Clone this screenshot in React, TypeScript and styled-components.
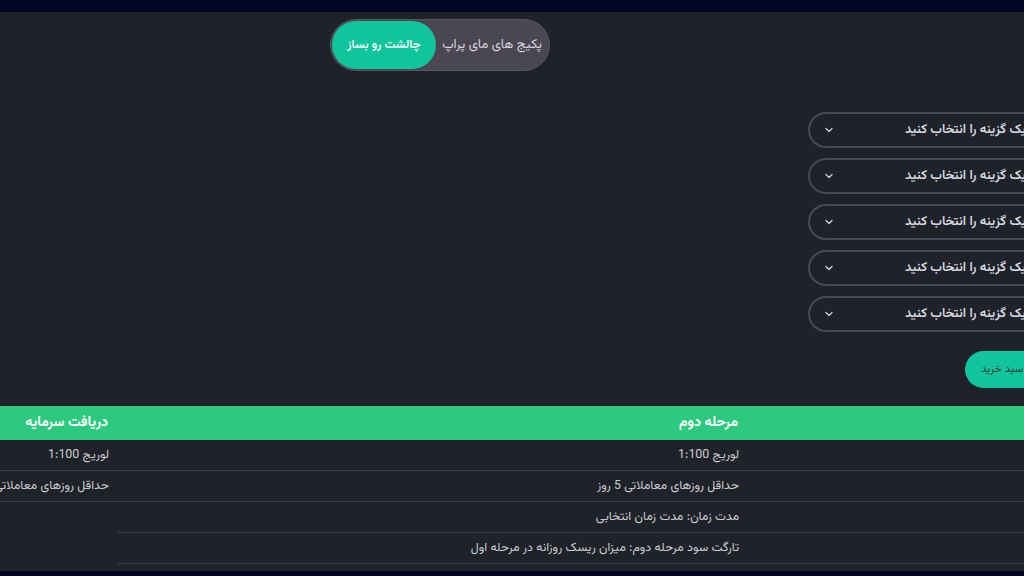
import React from "react";
import styled, { createGlobalStyle } from "styled-components";

const Global = createGlobalStyle`
  html, body { margin: 0; padding: 0; background: #1f2229; }
  body { font-family: "Vazirmatn", "Noto Sans Arabic", "DejaVu Sans", sans-serif; }
  * { box-sizing: border-box; }
`;

const Viewport = styled.div`
  width: 1024px;
  height: 576px;
  overflow: hidden;
  display: flex;
  flex-direction: column;
  background: #1f2229;
`;

const TopBar = styled.div`
  height: 12px;
  flex: none;
  background: #020823;
`;

const BottomBar = styled.div`
  height: 5px;
  flex: none;
  background: #020823;
`;

const Main = styled.div`
  flex: 1;
  overflow: hidden;
`;

const Page = styled.div`
  direction: rtl;
  width: 1890px;
  margin-left: -512px;
  display: flex;
  flex-direction: column;
`;

const ToggleRow = styled.div`
  display: flex;
  justify-content: center;
  padding-top: 7px;
`;

const Toggle = styled.div`
  width: 220px;
  height: 52px;
  margin-left: 14px;
  border-radius: 26px;
  background: #4a4753;
  border: 1px solid #57535f;
  padding: 1px;
  display: flex;
  align-items: stretch;
`;

const ToggleOption = styled.div<{ $active?: boolean }>`
  flex: ${(p) => (p.$active ? "0 0 104px" : "1")};
  order: ${(p) => (p.$active ? 2 : 1)};
  border-radius: 24px;
  background: ${(p) => (p.$active ? "#10c49b" : "transparent")};
  color: ${(p) => (p.$active ? "#f4fbf8" : "#d8d6dc")};
  font-size: ${(p) => (p.$active ? "12px" : "13px")};
  font-weight: ${(p) => (p.$active ? 600 : 400)};
  display: flex;
  align-items: center;
  justify-content: center;
  white-space: nowrap;
`;

const FormSection = styled.div`
  display: flex;
  padding-right: 240px;
  padding-top: 41px;
`;

const FormColumn = styled.div`
  width: 330px;
  display: flex;
  flex-direction: column;
  gap: 10px;
`;

const Select = styled.div`
  height: 36px;
  border: 2px solid #464a52;
  border-radius: 18px;
  display: flex;
  align-items: center;
  padding: 0 110px 0 14px;
  color: #d9dbe0;
  font-size: 13px;
  font-weight: 600;
  white-space: nowrap;
`;

const SelectText = styled.span`
  flex: 1;
`;

const Chevron = styled.svg`
  width: 10px;
  height: 10px;
  flex: none;
`;

const CartButton = styled.div`
  margin-top: 9px;
  width: 173px;
  height: 37px;
  border-radius: 19px;
  background: #12c49b;
  color: #2b3a3b;
  font-size: 11px;
  display: flex;
  align-items: center;
  justify-content: flex-end;
  padding-left: 16px;
  white-space: nowrap;
`;

const Table = styled.div`
  margin-top: 18px;
  display: grid;
  grid-template-columns: repeat(3, 630px);
  align-items: start;
`;

const Column = styled.div`
  display: flex;
  flex-direction: column;
`;

const HeadCell = styled.div`
  height: 34px;
  background: #2cc97e;
  color: #ffffff;
  font-size: 14px;
  font-weight: 700;
  display: flex;
  align-items: center;
  padding-right: 10px;
`;

const Cell = styled.div`
  height: 31px;
  border-bottom: 1px solid #3a3e45;
  color: #cacbd0;
  font-size: 12.4px;
  display: flex;
  align-items: center;
  padding-right: 9px;
  white-space: nowrap;
`;

const columns = [
  {
    title: "مرحله اول",
    rows: [
      "لوریج 1:100",
      "حداقل روزهای معاملاتی 5 روز",
      "مدت زمان: مدت زمان انتخابی",
      "تارگت سود مرحله اول: 8 درصد",
    ],
  },
  {
    title: "مرحله دوم",
    rows: [
      "لوریج 1:100",
      "حداقل روزهای معاملاتی 5 روز",
      "مدت زمان: مدت زمان انتخابی",
      "تارگت سود مرحله دوم: میزان ریسک روزانه در مرحله اول",
    ],
  },
  {
    title: "دریافت سرمایه",
    rows: ["لوریج 1:100", "حداقل روزهای معاملاتی 5 روز"],
  },
];

const selects = [0, 1, 2, 3, 4];

export default function App() {
  return (
    <>
      <Global />
      <Viewport>
        <TopBar />
        <Main>
          <Page>
            <ToggleRow>
              <Toggle>
                <ToggleOption>پکیج های مای پراپ</ToggleOption>
                <ToggleOption $active>چالشت رو بساز</ToggleOption>
              </Toggle>
            </ToggleRow>
            <FormSection>
              <FormColumn>
                {selects.map((i) => (
                  <Select key={i}>
                    <SelectText>یک گزینه را انتخاب کنید</SelectText>
                    <Chevron viewBox="0 0 10 10" fill="none">
                      <path
                        d="M2 3.5 L5 6.5 L8 3.5"
                        stroke="#cfd1d6"
                        strokeWidth="1.3"
                        strokeLinecap="round"
                        strokeLinejoin="round"
                      />
                    </Chevron>
                  </Select>
                ))}
                <CartButton>افزودن به سبد خرید</CartButton>
              </FormColumn>
            </FormSection>
            <Table>
              {columns.map((c) => (
                <Column key={c.title}>
                  <HeadCell>{c.title}</HeadCell>
                  {c.rows.map((r, i) => (
                    <Cell key={i}>{r}</Cell>
                  ))}
                </Column>
              ))}
            </Table>
          </Page>
        </Main>
        <BottomBar />
      </Viewport>
    </>
  );
}
